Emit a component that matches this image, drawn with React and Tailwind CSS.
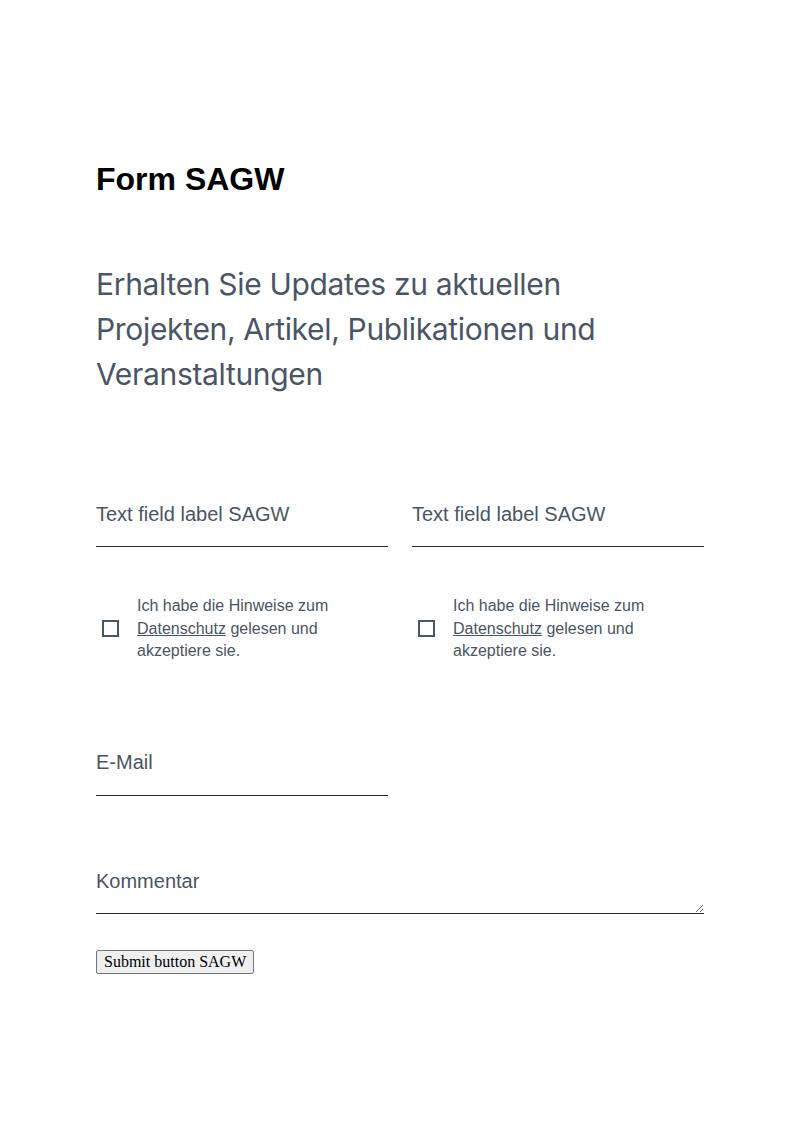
import { useState } from 'react';

function TextField({ label, type = 'text' }) {
  return (
    <input
      type={type}
      placeholder={label}
      className="block w-full h-[47px] pt-0 pb-[18px] px-0 leading-7 text-[20px] text-gray-800 placeholder:text-gray-600 border-b border-gray-800 outline-none font-['Liberation_Sans',Arial,sans-serif]"
    />
  );
}

function Consent() {
  const [checked, setChecked] = useState(false);
  return (
    <label className="flex items-center gap-[18px] cursor-pointer">
      <span
        onClick={() => setChecked(!checked)}
        className="ml-[6px] shrink-0 w-[17px] h-[17px] border-2 border-gray-600 flex items-center justify-center"
      >
        {checked && <span className="w-[9px] h-[9px] bg-gray-600" />}
      </span>
      <span className="text-[16px] leading-[22.5px] text-gray-600">
        Ich habe die Hinweise zum <span className="underline">Datenschutz</span> gelesen und
        akzeptiere sie.
      </span>
    </label>
  );
}

export default function App() {
  return (
    <div className="min-h-screen bg-white font-['Liberation_Sans',Arial,sans-serif]">
      <main className="px-24 pt-[160px] pb-40">
        <h1 className="text-[32px] leading-[38px] font-bold text-black">Form SAGW</h1>

        <p className="mt-16 text-[30px] leading-[45px] tracking-[-0.011em] text-gray-600 font-['Inter',sans-serif] pr-20">
          Erhalten Sie Updates zu aktuellen Projekten, Artikel, Publikationen und Veranstaltungen
        </p>

        <form onSubmit={(e) => e.preventDefault()} className="mt-[103px]">
          <div className="grid grid-cols-2 gap-x-6">
            <TextField label="Text field label SAGW" />
            <TextField label="Text field label SAGW" />
          </div>

          <div className="grid grid-cols-2 gap-x-6 mt-[48px]">
            <Consent />
            <Consent />
          </div>

          <div className="grid grid-cols-2 gap-x-6 mt-[86px]">
            <TextField label="E-Mail" type="email" />
          </div>

          <textarea
            rows={1}
            placeholder="Kommentar"
            className="block mt-[71px] w-full h-[47px] pt-0 pb-[18px] px-0 leading-7 text-[20px] text-gray-800 placeholder:text-gray-600 border-b border-gray-800 outline-none"
          />

          <button
            type="submit"
            className="mt-9 h-6 px-[7px] bg-[#efefef] border border-[#767676] rounded-[2px] text-[16px] leading-[20px] text-black font-['Liberation_Serif','Times_New_Roman',serif]"
          >
            Submit button SAGW
          </button>
        </form>
      </main>
    </div>
  );
}
